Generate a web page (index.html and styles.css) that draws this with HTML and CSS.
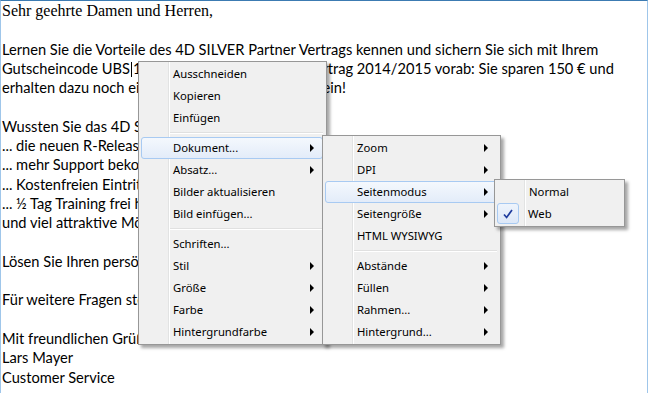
FILE: index.html
```html
<!DOCTYPE html>
<html lang="de">
<head>
    <meta charset="UTF-8">
    <title>4D Write Pro - Kontextmenü</title>
    <link rel="stylesheet" href="styles.css">
</head>
<body>
    <div class="screen">
        <div class="editor">
            <p class="greeting">Sehr geehrte Damen und Herren,</p>
            <p>Lernen Sie die Vorteile des 4D SILVER Partner Vertrags kennen und sichern Sie sich mit Ihrem<br>Gutscheincode UBS<span class="caret"></span>14SILVER Ihren 4D Partnervertrag 2014/2015 vorab: Sie sparen 150 € und<br>erhalten dazu noch einen 50 € 4D Trainingsgutschein!</p>
            <p>Wussten Sie das 4D SILVER Partner ...<br>... die neuen R-Releases kostenlos erhalten<br>... mehr Support bekommen<br>... Kostenfreien Eintritt zum 4D Summit haben<br>... ½ Tag Training frei haben<br>und viel attraktive Möglichkeiten mehr?</p>
            <p>Lösen Sie Ihren persönlichen Gutschein noch heute ein!</p>
            <p>Für weitere Fragen stehe ich Ihnen gerne zur Verfügung.</p>
            <p>Mit freundlichen Grüßen<br>Lars Mayer<br>Customer Service</p>
        </div>

        <!-- context menu -->
        <ul class="menu menu-main">
            <li class="item">Ausschneiden</li>
            <li class="item">Kopieren</li>
            <li class="item">Einfügen</li>
            <li class="sep"></li>
            <li class="item active sub">Dokument...</li>
            <li class="item sub">Absatz...</li>
            <li class="item">Bilder aktualisieren</li>
            <li class="item">Bild einfügen...</li>
            <li class="sep"></li>
            <li class="item">Schriften...</li>
            <li class="item sub">Stil</li>
            <li class="item sub">Größe</li>
            <li class="item sub">Farbe</li>
            <li class="item sub">Hintergrundfarbe</li>
        </ul>

        <ul class="menu menu-doc">
            <li class="item sub">Zoom</li>
            <li class="item sub">DPI</li>
            <li class="item active sub">Seitenmodus</li>
            <li class="item sub">Seitengröße</li>
            <li class="item">HTML WYSIWYG</li>
            <li class="sep"></li>
            <li class="item sub">Abstände</li>
            <li class="item sub">Füllen</li>
            <li class="item sub">Rahmen...</li>
            <li class="item sub">Hintergrund...</li>
        </ul>

        <ul class="menu menu-mode">
            <li class="item">Normal</li>
            <li class="item checked">
                <span class="check">
                    <svg width="20" height="20" viewBox="0 0 20 20"><path d="M6 10.5 L8.6 13.5 L14 6" fill="none" stroke="#1f3c9e" stroke-width="1.7"/></svg>
                </span>
                Web
            </li>
        </ul>
    </div>
</body>
</html>
```

FILE: styles.css
```css
* {
    box-sizing: border-box;
}

body {
    margin: 0;
    background: #fff;
}

.screen {
    position: relative;
    width: 649px;
    height: 393px;
    overflow: hidden;
}

/* document area */
.editor {
    width: 648px;
    height: 393px;
    border-top: 1px solid #3c7bb2;
    border-left: 1px solid #9fc6ea;
    border-right: 1px solid #9fc6ea;
    padding-left: 1px;
    font-family: Lato, "Open Sans", sans-serif;
    font-size: 14.65px;
    line-height: 19.3px;
    color: #000;
    white-space: nowrap;
}

.editor p {
    margin: 0 0 19.3px;
}

.editor .greeting {
    font-family: "Liberation Serif", "Times New Roman", serif;
    font-size: 16px;
}

.caret {
    display: inline-block;
    width: 0;
    height: 15px;
    margin: 0 1px;
    border-left: 1px solid #000;
    vertical-align: -3px;
}

/* menus */
.menu {
    position: absolute;
    margin: 0;
    padding: 1px 3px 1px 2px;
    list-style: none;
    border: 1px solid #979797;
    background:
        linear-gradient(to right, transparent 29px, #e2e3e3 29px, #e2e3e3 30px, #fff 30px, #fff 31px, transparent 31px),
        #f0f0f0;
    box-shadow: 3px 3px 3px rgba(0, 0, 0, 0.35);
    font-family: "Noto Sans", sans-serif;
    font-size: 11.3px;
    color: #000;
}

.menu-main {
    left: 138px;
    top: 61px;
    width: 189px;
}

.menu-doc {
    left: 322px;
    top: 135px;
    width: 179px;
}

.menu-mode {
    left: 494px;
    top: 179px;
    width: 131px;
}

.item {
    position: relative;
    display: flex;
    align-items: center;
    height: 22px;
    padding-left: 31px;
    padding-bottom: 1px;
    border: 1px solid transparent;
    border-radius: 3px;
}

.item.active {
    border-color: #a8caf2;
    background: linear-gradient(#f4f8fd, #e3ecf9);
}

.item.sub::after {
    content: "";
    margin-left: auto;
    margin-right: 8px;
    border-left: 4px solid #000;
    border-top: 4px solid transparent;
    border-bottom: 4px solid transparent;
}

.sep {
    height: 8px;
    margin-left: 29px;
    padding-top: 3px;
}

.sep::before {
    content: "";
    display: block;
    border-top: 1px solid #e0e0e0;
    border-bottom: 1px solid #fff;
}

.item.checked {
    padding-left: 0;
}

.check {
    width: 22px;
    height: 21px;
    margin: 0 9px 0 -1px;
    display: flex;
    align-items: center;
    justify-content: center;
    border: 1px solid #a8caf2;
    border-radius: 3px;
    background: linear-gradient(#eef4fc, #dde8f8);
}
```
